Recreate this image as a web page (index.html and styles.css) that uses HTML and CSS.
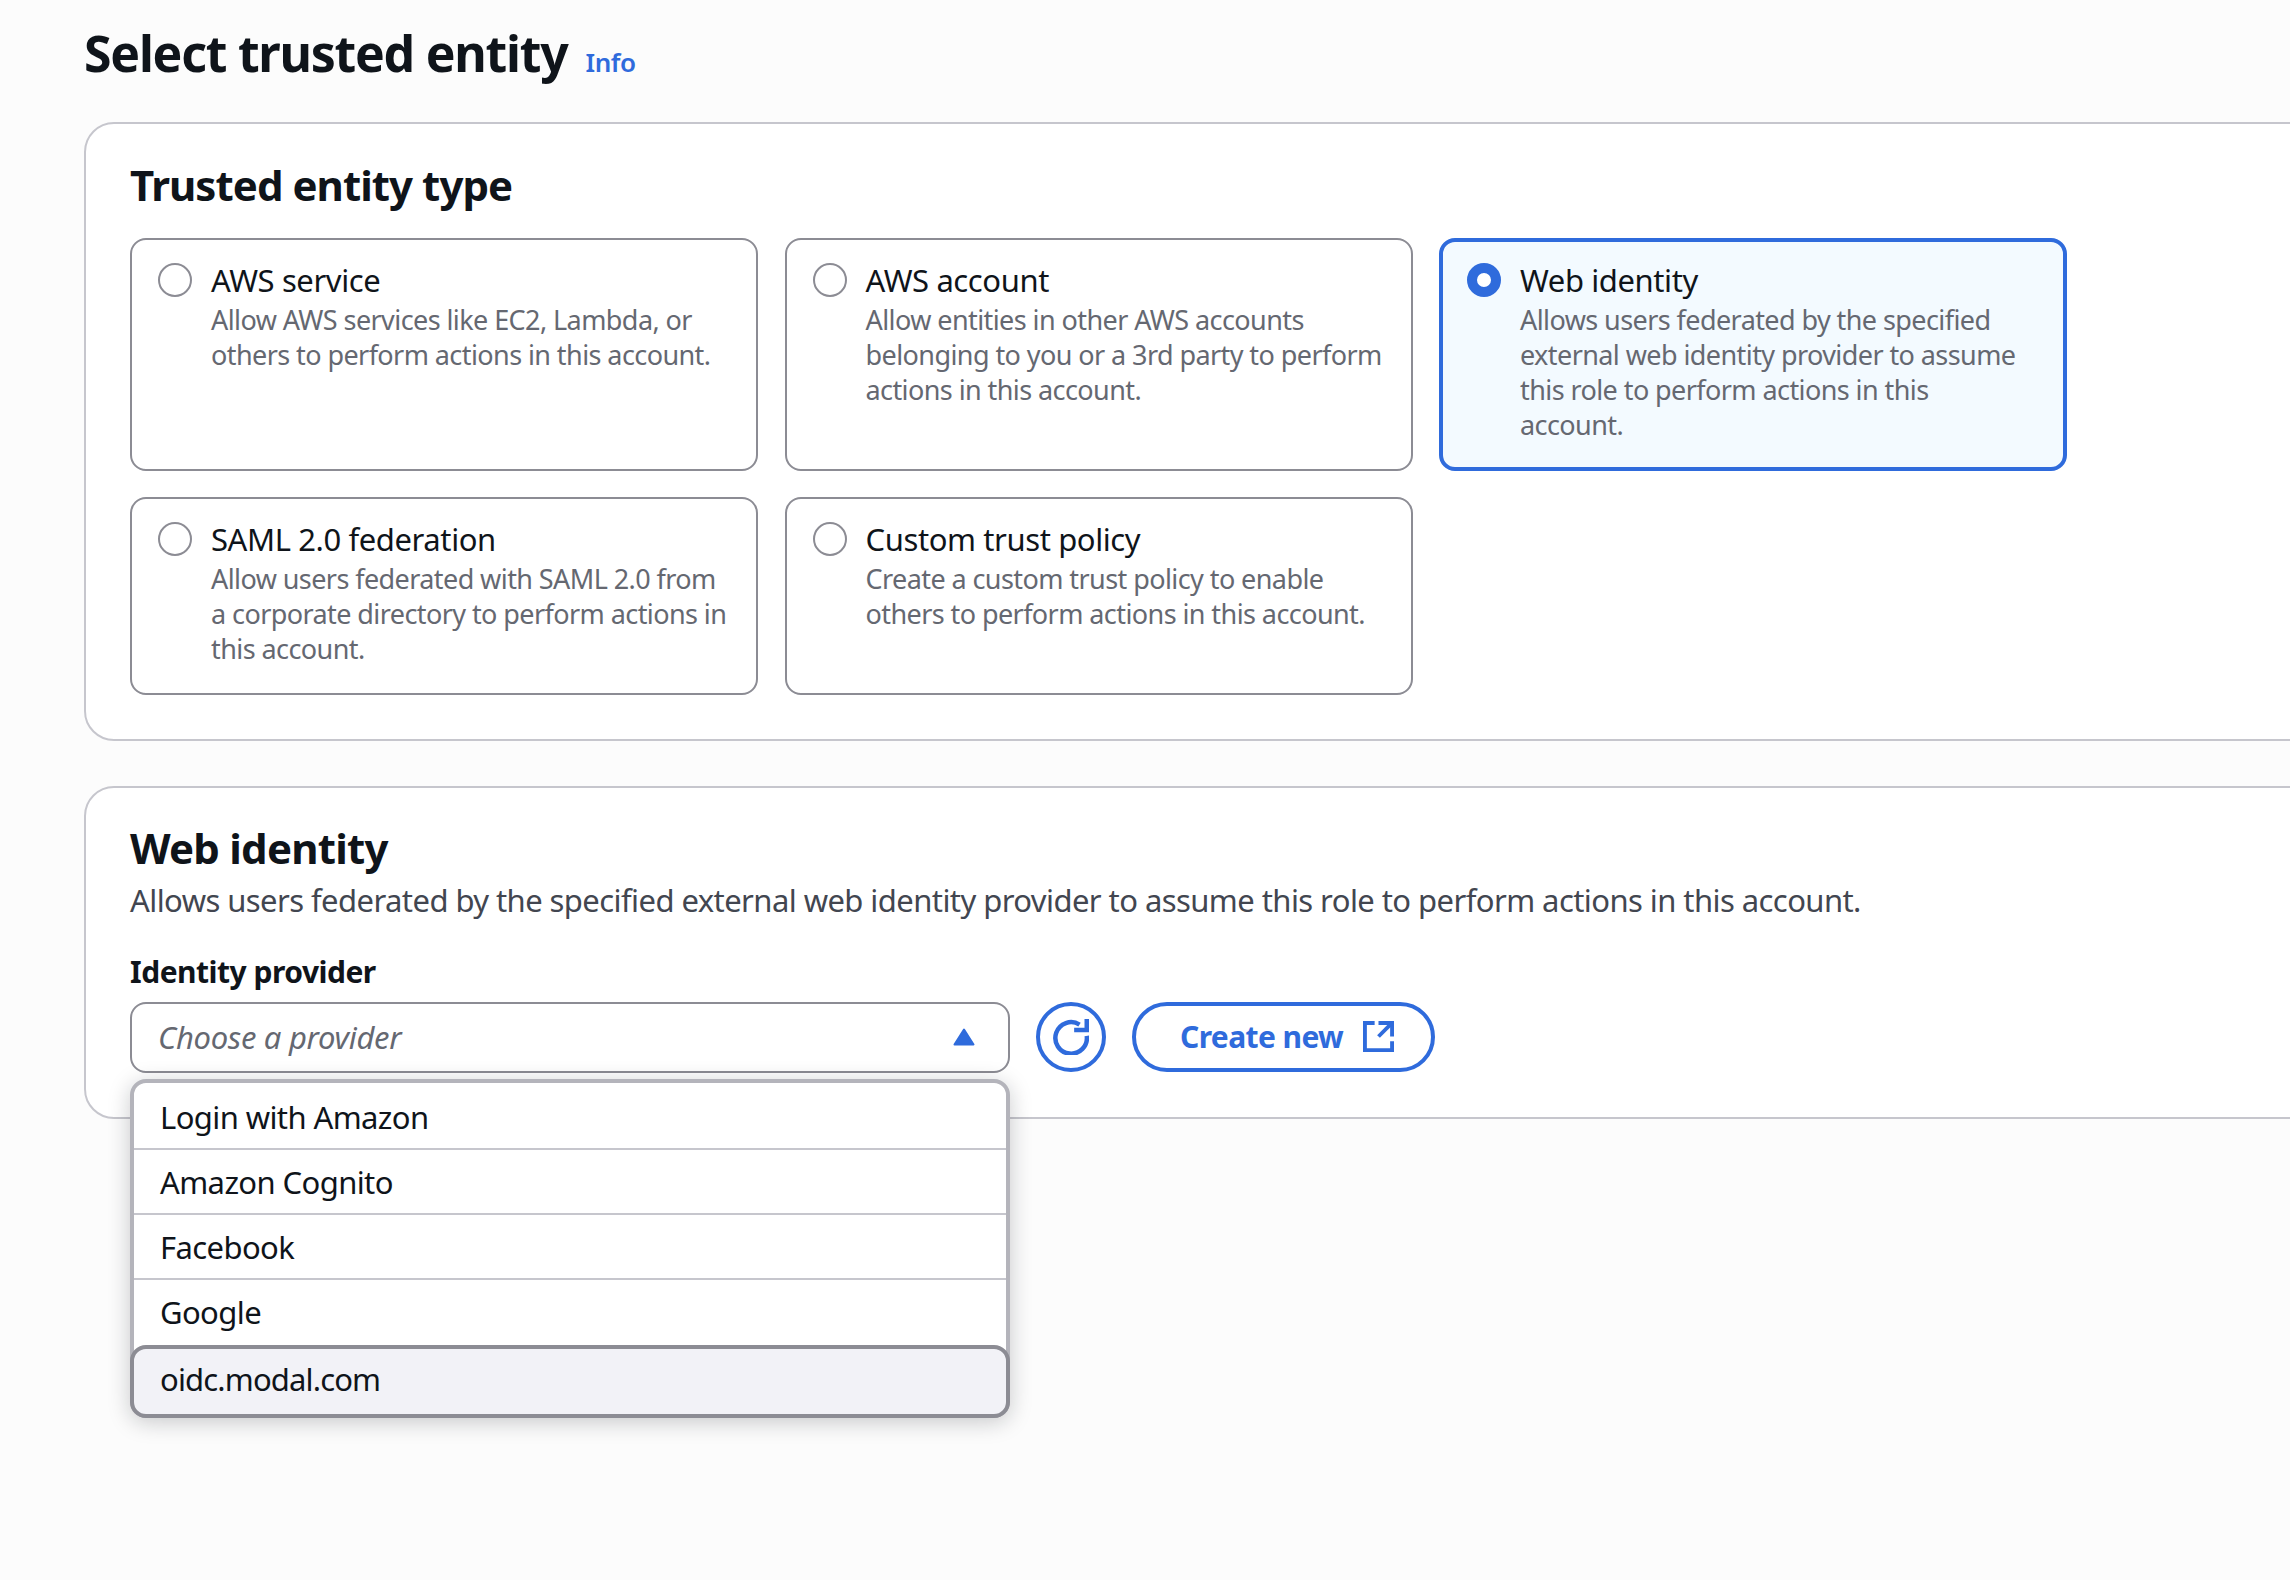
FILE: index.html
```html
<!DOCTYPE html>
<html lang="en">
<head>
<meta charset="utf-8">
<title>Select trusted entity</title>
<link rel="stylesheet" href="styles.css">
</head>
<body>
<main class="page">
  <header class="page-head">
    <h1>Select trusted entity</h1>
    <a class="info" href="#">Info</a>
  </header>

  <section class="panel panel-types">
    <h2>Trusted entity type</h2>
    <div class="tiles">
      <div class="tile">
        <span class="radio"></span>
        <div class="tile-text">
          <div class="tile-title">AWS service</div>
          <p>Allow AWS services like EC2, Lambda, or others to perform actions in this account.</p>
        </div>
      </div>
      <div class="tile">
        <span class="radio"></span>
        <div class="tile-text">
          <div class="tile-title">AWS account</div>
          <p>Allow entities in other AWS accounts belonging to you or a 3rd party to perform actions in this account.</p>
        </div>
      </div>
      <div class="tile tile-on">
        <span class="radio radio-on"></span>
        <div class="tile-text">
          <div class="tile-title">Web identity</div>
          <p>Allows users federated by the specified external web identity provider to assume this role to perform actions in this account.</p>
        </div>
      </div>
      <div class="tile">
        <span class="radio"></span>
        <div class="tile-text">
          <div class="tile-title">SAML 2.0 federation</div>
          <p>Allow users federated with SAML 2.0 from a corporate directory to perform actions in this account.</p>
        </div>
      </div>
      <div class="tile">
        <span class="radio"></span>
        <div class="tile-text">
          <div class="tile-title">Custom trust policy</div>
          <p>Create a custom trust policy to enable others to perform actions in this account.</p>
        </div>
      </div>
    </div>
  </section>

  <section class="panel panel-web">
    <h2 class="web-title">Web identity</h2>
    <p class="panel-desc">Allows users federated by the specified external web identity provider to assume this role to perform actions in this account.</p>
    <div class="field-label">Identity provider</div>
    <div class="field-row">
      <div class="select-wrap">
        <div class="select">
          <span class="placeholder">Choose a provider</span>
          <svg class="caret" viewBox="0 0 22 18" aria-hidden="true"><path d="M11 1.500 20.500 16.500H1.500Z"/></svg>
        </div>
        <ul class="menu">
          <li>Login with Amazon</li>
          <li>Amazon Cognito</li>
          <li>Facebook</li>
          <li class="no-line">Google</li>
          <li class="current">oidc.modal.com</li>
        </ul>
      </div>
      <button class="icon-btn" type="button" aria-label="Refresh">
        <svg viewBox="0 0 16 16" aria-hidden="true"><path d="M15 7.500A7 7 0 1 1 11.800 2.500"/><path d="M15 0V4.900H9.400"/></svg>
      </button>
      <button class="create-btn" type="button">
        <span>Create new</span>
        <svg viewBox="0 0 16 16" aria-hidden="true"><path d="M15 8V1H8"/><path d="M15 1 8 8"/><path d="M6 1H1V15H15V10.500"/></svg>
      </button>
    </div>
  </section>
</main>
</body>
</html>
```

FILE: styles.css
```css
* { box-sizing: border-box; }

html, body {
  margin: 0;
  height: 100%;
  overflow: hidden;
  background: #fcfcfc;
}

body {
  font-family: "Noto Sans", "Liberation Sans", sans-serif;
  color: #0f141a;
}

.page {
  width: 2290px;
  height: 1580px;
  padding: 19px 0 0 84px;
  overflow: hidden;
}

.page-head {
  display: flex;
  align-items: baseline;
  gap: 18px;
  height: 103px;
}

h1 {
  margin: 0;
  font-size: 50px;
  line-height: 68px;
  font-weight: 700;
  letter-spacing: -1.25px;
}

.info {
  color: #2f6bdc;
  font-size: 26px;
  font-weight: 600;
  letter-spacing: -0.4px;
  text-decoration: none;
}

.panel {
  width: 2300px;
  background: #fff;
  border: 2px solid #c6c6cd;
  border-radius: 30px;
  padding: 0 44px;
}

.panel-types {
  height: 619px;
  padding-top: 33px;
  margin-bottom: 45px;
}

.panel-web {
  height: 333px;
  padding-top: 32px;
}

h2 {
  margin: 0;
  font-size: 42px;
  line-height: 56px;
  font-weight: 700;
  letter-spacing: -0.95px;
}

.web-title {
  letter-spacing: -0.75px;
}

.tiles {
  display: grid;
  grid-template-columns: repeat(3, 628px);
  gap: 26px 26.5px;
  margin-top: 25px;
}

.tile {
  display: flex;
  gap: 19px;
  padding: 23px 20px 27px 26px;
  border: 2px solid #8c8c94;
  border-radius: 16px;
  background: #fff;
}

.tile-on {
  background: #f3faff;
  border: 4px solid #2f6bdc;
  padding: 21px 40px 25px 24px;
}

.radio {
  flex: none;
  width: 34px;
  height: 34px;
  border: 2px solid #8c8c94;
  border-radius: 50%;
  background: #fff;
}

.radio-on {
  border: 10px solid #2f6bdc;
}

.tile-title {
  font-size: 31px;
  line-height: 35px;
  letter-spacing: -0.4px;
}

.tile-text p {
  margin: 4px 0 0;
  font-size: 27px;
  line-height: 35px;
  color: #656871;
  letter-spacing: -0.58px;
}

.panel-desc {
  margin: 3px 0 0;
  font-size: 31px;
  line-height: 42px;
  color: #424650;
  letter-spacing: -0.57px;
}

.field-label {
  margin-top: 31px;
  font-size: 30px;
  line-height: 40px;
  font-weight: 700;
  letter-spacing: -0.5px;
}

.field-row {
  display: flex;
  align-items: flex-start;
  gap: 26px;
  margin-top: 10px;
}

.select-wrap {
  position: relative;
  width: 880px;
}

.select {
  display: flex;
  align-items: center;
  justify-content: space-between;
  height: 71px;
  padding: 0 33px 2px 26px;
  background: #fff;
  border: 2px solid #8c8c94;
  border-radius: 16px;
}

.placeholder {
  font-size: 31px;
  font-style: italic;
  color: #656871;
  letter-spacing: -0.3px;
}

.caret {
  width: 22px;
  height: 18px;
  fill: #2f6bdc;
  stroke: #2f6bdc;
  stroke-width: 2;
  stroke-linejoin: round;
}

.menu {
  position: absolute;
  top: 77px;
  left: 0;
  right: 0;
  margin: 0;
  padding: 2px 0 0;
  list-style: none;
  background: #fff;
  border: 4px solid #b4b4bb;
  border-radius: 16px;
  box-shadow: 0 4px 22px rgba(15, 20, 26, 0.22);
}

.menu li {
  height: 65px;
  padding-left: 26px;
  font-size: 31px;
  line-height: 64px;
  letter-spacing: -0.6px;
  border-bottom: 2px solid #c6c6cd;
}

.menu .no-line {
  border-bottom: 0;
}

.menu .current {
  height: 73px;
  margin: 0 -4px -4px;
  padding-left: 26px;
  line-height: 60px;
  letter-spacing: -0.85px;
  background: #f2f2f7;
  border: 4px solid #8c8c94;
  border-radius: 16px;
}

.icon-btn {
  flex: none;
  display: flex;
  align-items: center;
  justify-content: center;
  width: 70px;
  height: 70px;
  padding: 0;
  background: #fff;
  border: 4px solid #2f6bdc;
  border-radius: 50%;
}

.icon-btn svg,
.create-btn svg {
  fill: none;
  stroke: #2f6bdc;
  stroke-width: 2;
}

.icon-btn svg {
  width: 36px;
  height: 36px;
}

.create-btn {
  flex: none;
  display: flex;
  align-items: center;
  gap: 20px;
  width: 303px;
  height: 70px;
  padding: 0 0 2px 44px;
  background: #fff;
  border: 4px solid #2f6bdc;
  border-radius: 35px;
  color: #2f6bdc;
  font-family: inherit;
  font-size: 30px;
  font-weight: 700;
  letter-spacing: -0.6px;
}

.create-btn svg {
  width: 31px;
  height: 31px;
}
```
